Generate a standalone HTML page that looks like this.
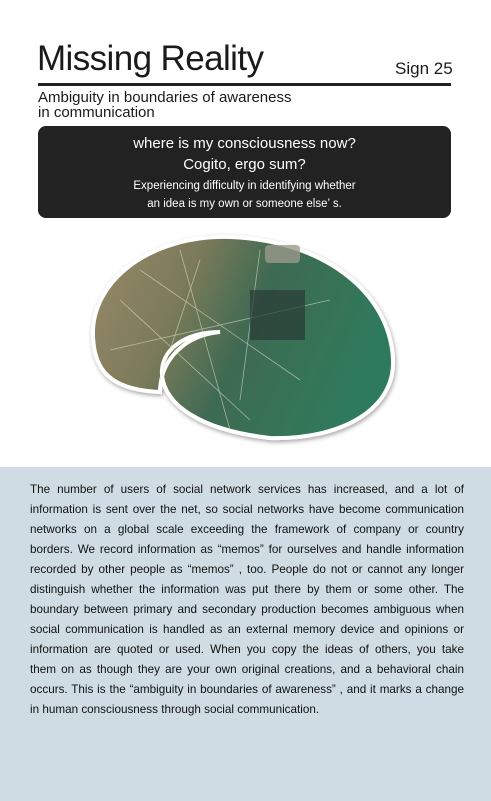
<!DOCTYPE html>
<html><head><style>
body{margin:0;width:491px;height:801px;background:#fff;position:relative;overflow:hidden;font-family:"Liberation Sans","DejaVu Sans",sans-serif;color:#1a1a1a}
.a{position:absolute;white-space:nowrap}
#panel{position:absolute;left:0;top:467px;width:491px;height:334px;background:#d0dce4}
.l{position:absolute;left:30px;width:434px;font-size:11.7px;text-align:justify;text-align-last:justify;white-space:nowrap;color:#111;overflow:visible}
.l.e{text-align-last:left}
</style></head><body>
<div class="a" style="left:37px;top:39px;font-size:35px;letter-spacing:-0.6px">Missing Reality</div>
<div class="a" style="left:395px;top:59px;font-size:17px">Sign 25</div>
<div class="a" style="left:38px;top:83px;width:413px;height:3px;background:#222"></div>
<div class="a" style="left:38px;top:90px;font-size:15px;line-height:15px">Ambiguity in boundaries of awareness<br>in communication</div>
<div class="a" style="left:38px;top:126px;width:413px;height:92px;background:#222;border-radius:8px;color:#fff;text-align:center">
<div style="position:absolute;top:9px;width:100%;font-size:15px">where is my consciousness now?</div>
<div style="position:absolute;top:30px;width:100%;font-size:15px">Cogito, ergo sum?</div>
<div style="position:absolute;top:54px;width:100%;font-size:11.5px">Experiencing difficulty in identifying whether</div>
<div style="position:absolute;top:72px;width:100%;font-size:11.5px">an idea is my own or someone else’ s.</div>
</div>
<svg class="a" style="left:0;top:0" width="491" height="470">
<defs>
<linearGradient id="g" x1="0" y1="0" x2="1" y2="0.3">
<stop offset="0" stop-color="#9a8a6a"/><stop offset="0.35" stop-color="#7a7a5a"/><stop offset="0.6" stop-color="#3e6a52"/><stop offset="1" stop-color="#2f7a5c"/></linearGradient>
<filter id="s"><feDropShadow dx="1" dy="2" stdDeviation="2" flood-opacity="0.35"/></filter>
</defs>
<path filter="url(#s)" d="M220 332 C185 332 160 350 162 375 C165 405 200 430 270 438 C340 440 395 410 393 360 C390 290 320 240 230 237 C150 235 95 280 93 330 C92 370 110 390 160 392 C160 360 185 335 220 332 Z" fill="url(#g)" stroke="#fff" stroke-width="4"/>
<g stroke="#e8e4c8" stroke-width="0.8" opacity="0.6" fill="none">
<path d="M120 300 L250 420 M140 270 L300 380 M180 250 L230 430 M110 350 L330 300 M200 260 L160 380 M260 250 L240 400"/>
</g>
<rect x="250" y="290" width="55" height="50" fill="#2a3a34" opacity="0.7"/>
<rect x="265" y="245" width="35" height="18" rx="4" fill="#9a9a8a" opacity="0.8"/>
</svg>
<div id="panel"></div>
<div class="l" style="top:483px">The number of users of social network services has increased, and a lot of</div>
<div class="l" style="top:503px">information is sent over the net, so social networks have become communication</div>
<div class="l" style="top:523px">networks on a global scale exceeding the framework of company or country</div>
<div class="l" style="top:543px">borders. We record information as “memos” for ourselves and handle information</div>
<div class="l" style="top:563px">recorded by other people as “memos” , too. People do not or cannot any longer</div>
<div class="l" style="top:583px">distinguish whether the information was put there by them or some other. The</div>
<div class="l" style="top:603px">boundary between primary and secondary production becomes ambiguous when</div>
<div class="l" style="top:623px">social communication is handled as an external memory device and opinions or</div>
<div class="l" style="top:643px">information are quoted or used. When you copy the ideas of others, you take</div>
<div class="l" style="top:663px">them on as though they are your own original creations, and a behavioral chain</div>
<div class="l" style="top:683px">occurs. This is the “ambiguity in boundaries of awareness” , and it marks a change</div>
<div class="l e" style="top:703px">in human consciousness through social communication.</div>
</body></html>
